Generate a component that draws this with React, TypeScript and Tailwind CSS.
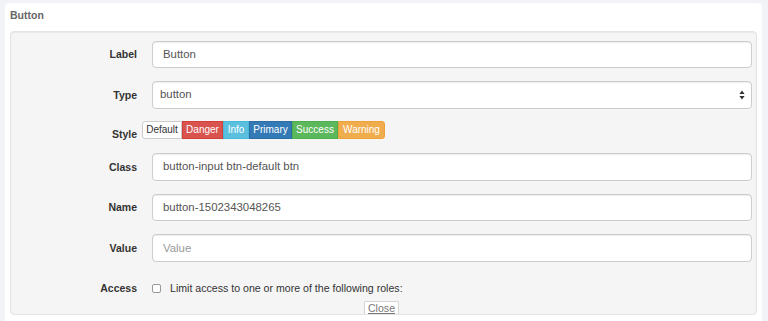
import React from "react";

const F = { fontFamily: '"Liberation Sans", Arial, Helvetica, sans-serif' };

function Label({ children, className = "" }: { children: React.ReactNode; className?: string }) {
  return (
    <div className={"w-[126px] shrink-0 text-right text-[10.5px] leading-[12px] font-bold text-[#333] " + className}>
      {children}
    </div>
  );
}

function Field({ children, placeholder = false, pl = "pl-[10px]" }: { children: React.ReactNode; placeholder?: boolean; pl?: string }) {
  return (
    <div
      className={
        "ml-[15px] flex h-[27.5px] flex-1 items-center rounded-[4px] border border-[#cccccc] bg-white text-[11.4px] shadow-[inset_0_1px_1px_rgba(0,0,0,0.075)] " +
        pl +
        (placeholder ? " text-[#999]" : " text-[#555]")
      }
    >
      {children}
    </div>
  );
}

export default function App() {
  const styles = [
    { t: "Default", c: "bg-white text-[#333] border-[#ccc]", w: "w-[40px]", r: "rounded-l-[3px]" },
    { t: "Danger", c: "bg-[#d9534f] text-white border-[#d43f3a]", w: "w-[41px]", r: "" },
    { t: "Info", c: "bg-[#5bc0de] text-white border-[#46b8da]", w: "w-[26px]", r: "" },
    { t: "Primary", c: "bg-[#337ab7] text-white border-[#2e6da4]", w: "w-[43px]", r: "" },
    { t: "Success", c: "bg-[#5cb85c] text-white border-[#4cae4c]", w: "w-[46px]", r: "" },
    { t: "Warning", c: "bg-[#f0ad4e] text-white border-[#eea236]", w: "w-[47px]", r: "rounded-r-[3px]" },
  ];
  return (
    <div style={F} className="h-[321px] w-[768px] overflow-hidden bg-[#f1f3f7] pl-[5px] pr-[6px] pt-[3px]">
      <div className="h-full rounded-t-[4px] bg-white px-[5px]">
        <div className="pt-[6px] text-[10.5px] leading-[12px] font-bold text-[#666]">Button</div>
        <div className="mt-[10px] flex h-[284px] flex-col rounded-[4px] border border-[#e3e3e3] bg-[#f5f5f5] pr-[4px] pt-[8.5px] shadow-[inset_0_1px_1px_rgba(0,0,0,0.05)]">
          <div className="flex items-center">
            <Label>Label</Label>
            <Field>Button</Field>
          </div>
          <div className="mt-[13px] flex items-center">
            <Label>Type</Label>
            <Field pl="pl-[7px] pr-[6px]">
              <span className="flex-1">button</span>
              <svg width="6" height="10" viewBox="0 0 6 10" className="text-[#333]">
                <path d="M3 0.5 L5.6 4 L0.4 4 Z" fill="currentColor" />
                <path d="M3 9.5 L5.6 6 L0.4 6 Z" fill="currentColor" />
              </svg>
            </Field>
          </div>
          <div className="mt-[12.5px] flex items-start">
            <Label className="pt-[6.5px]">Style</Label>
            <div className="ml-[5px] flex h-[18px]">
              {styles.map((s) => (
                <div
                  key={s.t}
                  className={
                    "flex h-[18px] items-center justify-center border text-[10px] leading-none " +
                    s.c + " " + s.w + " " + s.r
                  }
                >
                  {s.t}
                </div>
              ))}
            </div>
          </div>
          <div className="mt-[13.7px] flex items-center">
            <Label>Class</Label>
            <Field>button-input btn-default btn</Field>
          </div>
          <div className="mt-[13px] flex items-center">
            <Label>Name</Label>
            <Field>button-1502343048265</Field>
          </div>
          <div className="mt-[13.3px] flex items-center">
            <Label>Value</Label>
            <Field placeholder>Value</Field>
          </div>
          <div className="mt-[20px] flex items-center">
            <Label>Access</Label>
            <div className="ml-[15px] mt-[1px] h-[9px] w-[9px] rounded-[2px] border border-[#9a9a9a] bg-white" />
            <div className="ml-[9px] text-[10.6px] leading-[12px] text-[#333]">
              Limit access to one or more of the following roles:
            </div>
          </div>
          <div className="mt-auto flex justify-center">
            <div className="flex h-[13px] w-[35px] items-center justify-center rounded-t-[2px] border border-b-0 border-[#d5d5d5] bg-white text-[10.6px] leading-none text-[#777] underline">
              Close
            </div>
          </div>
        </div>
      </div>
    </div>
  );
}
